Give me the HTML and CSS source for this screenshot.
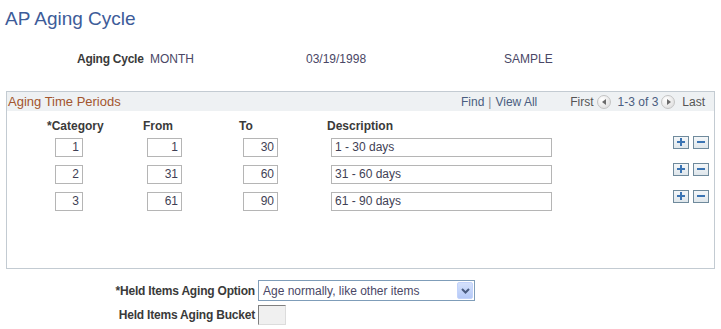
FILE: index.html
```html
<!DOCTYPE html>
<html lang="en">
<head>
    <meta charset="UTF-8">
    <title>AP Aging Cycle</title>
    <link rel="stylesheet" href="styles.css">
</head>
<body>
    <h1 class="page-title">AP Aging Cycle</h1>

    <div class="summary">
        <span class="label summary-label">Aging Cycle</span>
        <span class="value cycle-id">MONTH</span>
        <span class="value cycle-date">03/19/1998</span>
        <span class="value cycle-setid">SAMPLE</span>
    </div>

    <div class="grid-box">
        <div class="grid-head">
            <span class="grid-title">Aging Time Periods</span>
            <div class="grid-nav">
                <span class="nav-link">Find</span>
                <span class="nav-sep">|</span>
                <span class="nav-link">View All</span>
                <span class="nav-first">First</span>
                <span class="nav-arrow nav-prev"></span>
                <span class="nav-count">1-3 of 3</span>
                <span class="nav-arrow nav-next"></span>
                <span class="nav-last">Last</span>
            </div>
        </div>

        <div class="grid-cols grid-labels">
            <span class="label col-cat">*Category</span>
            <span class="label">From</span>
            <span class="label">To</span>
            <span class="label">Description</span>
            <span></span>
        </div>

        <div class="grid-rows">
            <div class="grid-cols">
                <span class="field num f-cat">1</span>
                <span class="field num f-range">1</span>
                <span class="field num f-range">30</span>
                <span class="field f-desc">1 - 30 days</span>
                <span class="row-btns"><span class="btn btn-add"></span><span class="btn btn-del"></span></span>
            </div>
            <div class="grid-cols">
                <span class="field num f-cat">2</span>
                <span class="field num f-range">31</span>
                <span class="field num f-range">60</span>
                <span class="field f-desc">31 - 60 days</span>
                <span class="row-btns"><span class="btn btn-add"></span><span class="btn btn-del"></span></span>
            </div>
            <div class="grid-cols">
                <span class="field num f-cat">3</span>
                <span class="field num f-range">61</span>
                <span class="field num f-range">90</span>
                <span class="field f-desc">61 - 90 days</span>
                <span class="row-btns"><span class="btn btn-add"></span><span class="btn btn-del"></span></span>
            </div>
        </div>
    </div>

    <div class="held">
        <span class="label held-label">*Held Items Aging Option</span>
        <div class="select">
            <span class="select-text">Age normally, like other items</span>
            <span class="select-btn">
                <svg width="9" height="6" viewBox="0 0 9 6"><path d="M1 1 L4.5 4.5 L8 1" fill="none" stroke="#4a5c80" stroke-width="2"/></svg>
            </span>
        </div>
        <span class="label held-label">Held Items Aging Bucket</span>
        <span class="field disabled"></span>
    </div>
</body>
</html>
```

FILE: styles.css
```css
* {
    box-sizing: border-box;
    margin: 0;
    padding: 0;
}

body {
    font-family: Arial, 'Liberation Sans', sans-serif;
    font-size: 12px;
    color: #333;
    background: white;
    width: 721px;
    height: 329px;
    overflow: hidden;
}

.page-title {
    font-size: 19px;
    font-weight: normal;
    line-height: 22px;
    color: #3d5c99;
    margin: 8px 0 0 5px;
}

.label {
    font-weight: bold;
    color: #3a3a3a;
    line-height: 14px;
}

.value {
    color: #4a4766;
    line-height: 14px;
}

.summary {
    display: flex;
    margin: 22px 0 0 77px;
}

.summary-label {
    width: 73px;
    letter-spacing: -0.25px;
}

.cycle-id {
    width: 156px;
}

.cycle-date {
    width: 198px;
}

.grid-box {
    margin: 25px 0 0 6px;
    width: 709px;
    height: 178px;
    border: 1px solid #c3cbd2;
}

.grid-head {
    display: flex;
    justify-content: space-between;
    align-items: center;
    height: 19px;
    background: #eef1f3;
    padding: 0 9px 0 1px;
}

.grid-title {
    font-size: 13px;
    color: #a3552e;
}

.grid-nav {
    display: flex;
    align-items: center;
    color: #555;
}

.nav-link,
.nav-count {
    color: #4a5d80;
}

.nav-sep {
    color: #888;
    margin: 0 4px;
}

.nav-first {
    margin-left: 33px;
}

.nav-arrow {
    width: 14px;
    height: 14px;
    border-radius: 50%;
    border: 1px solid #c4c4c4;
    background: radial-gradient(circle at 35% 30%, #ffffff, #d9d9d9);
    position: relative;
    margin: 0 7px 0 3px;
}

.nav-arrow::after {
    content: "";
    position: absolute;
    top: 3px;
    border-top: 3px solid transparent;
    border-bottom: 3px solid transparent;
}

.nav-prev::after {
    left: 4px;
    border-right: 4px solid #6a6a6a;
}

.nav-next::after {
    left: 5px;
    border-left: 4px solid #6a6a6a;
}

.grid-cols {
    display: grid;
    grid-template-columns: 136px 96px 88px 345px 41px;
    align-items: start;
}

.grid-labels {
    margin-top: 8px;
}

.col-cat {
    padding-left: 40px;
}

.grid-rows {
    display: flex;
    flex-direction: column;
    gap: 8px;
    margin-top: 5px;
}

.field {
    display: block;
    height: 19px;
    line-height: 17px;
    border: 1px solid #b5b5b5;
    background: white;
    padding: 0 3px;
    color: #3f3f55;
}

.num {
    text-align: right;
}

.f-cat {
    width: 28px;
    margin-left: 48px;
}

.f-range {
    width: 35px;
    margin-left: 4px;
}

.f-desc {
    width: 221px;
    margin-left: 4px;
}

.row-btns {
    display: flex;
    gap: 4px;
    margin: -2px 0 0 1px;
}

.btn {
    width: 16px;
    height: 13px;
    border: 1px solid #6f8a9c;
    background: linear-gradient(#f4f7f9, #dfe6eb);
    position: relative;
}

.btn::before,
.btn::after {
    content: "";
    position: absolute;
    background: #3b74b3;
}

.btn::before {
    left: 3px;
    top: 4px;
    width: 8px;
    height: 2px;
}

.btn-add::after {
    left: 6px;
    top: 1px;
    width: 2px;
    height: 8px;
}

.btn-del::after {
    display: none;
}

.held {
    display: grid;
    grid-template-columns: 255px auto;
    column-gap: 3px;
    row-gap: 4px;
    align-items: center;
    justify-items: start;
    margin-top: 11px;
}

.held-label {
    justify-self: end;
    letter-spacing: -0.2px;
}

.select {
    display: flex;
    align-items: center;
    justify-content: space-between;
    width: 217px;
    height: 21px;
    border: 1px solid #7f9db9;
    padding: 0 1px 0 4px;
    color: #4a4766;
}

.select-btn {
    display: flex;
    align-items: center;
    justify-content: center;
    width: 16px;
    height: 17px;
    border-radius: 2px;
    background: linear-gradient(#d4e1fc, #b5c9f7);
    border: 1px solid #c3d3fb;
}

.disabled {
    width: 28px;
    height: 20px;
    background: #f0f0f0;
    border-color: #808080 #dcdcdc #dcdcdc #808080;
}
```
